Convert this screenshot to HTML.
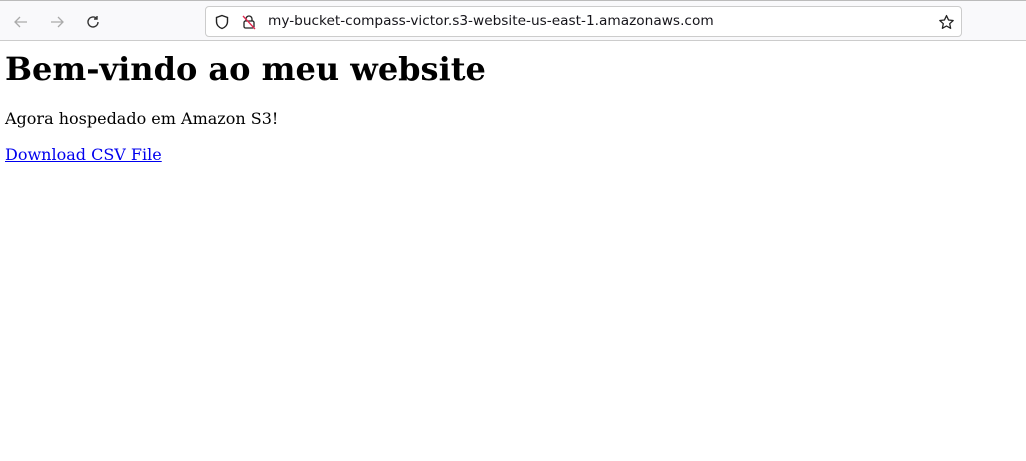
<!DOCTYPE html>
<html><head><style>
html,body{margin:0;padding:0;background:#fff;width:1026px;height:461px;overflow:hidden}
.bar{position:absolute;left:0;top:0;width:1026px;height:41px;background:#f9f9fb;border-top:1px solid #bbb;border-bottom:1px solid #ccc;box-sizing:border-box}
.url{position:absolute;left:205px;top:5px;width:757px;height:31px;background:#fff;border:1px solid #ccc;border-radius:4px;box-sizing:border-box}
.url span{position:absolute;left:62px;top:6px;font:13.7px "DejaVu Sans","Liberation Sans",sans-serif;color:#15141a}
svg{position:absolute}
.c{position:absolute;top:42px;left:0;right:0;font-family:"DejaVu Serif",serif;color:#000}
h1{font-size:32px;margin:0;position:absolute;left:5px;top:8px;white-space:nowrap}
p{margin:0;position:absolute;left:5px;font-size:16px;white-space:nowrap}
a{color:#0000ee}
</style></head><body>
<div class="bar">
<svg style="left:12px;top:12px" width="18" height="18" viewBox="0 0 18 18" fill="none" stroke="#aaa" stroke-width="1.3"><path d="M15 9H3M8 4L3 9l5 5"/></svg>
<svg style="left:48px;top:12px" width="18" height="18" viewBox="0 0 18 18" fill="none" stroke="#aaa" stroke-width="1.3"><path d="M3 9h12M10 4l5 5-5 5"/></svg>
<svg style="left:84px;top:12px" width="18" height="18" viewBox="0 0 18 18" fill="none" stroke="#333" stroke-width="1.4"><path d="M14 9a5 5 0 1 1-1.5-3.6"/><path d="M13 3v3h-3"/></svg>
<div class="url">
<svg style="left:8px;top:7px" width="16" height="16" viewBox="0 0 16 16" fill="none" stroke="#222" stroke-width="1.4"><path d="M8 1.5l5.5 2v4c0 3.5-2.5 6-5.5 7-3-1-5.5-3.5-5.5-7v-4z"/></svg>
<svg style="left:35px;top:7px" width="16" height="16" viewBox="0 0 16 16" fill="none" stroke="#222" stroke-width="1.3"><rect x="3" y="7" width="10" height="7" rx="1.5"/><path d="M5 7V5a3 3 0 0 1 6 0v2"/><path d="M2 2l12 13" stroke="#e22850"/></svg>
<span>my-bucket-compass-victor.s3-website-us-east-1.amazonaws.com</span>
<svg style="left:732px;top:7px" width="17" height="17" viewBox="0 0 16 16" fill="none" stroke="#222" stroke-width="1.2"><path d="M8 1.5l1.9 4.1 4.4.5-3.3 3 .9 4.4L8 11.3l-3.9 2.2.9-4.4-3.3-3 4.4-.5z" stroke-linejoin="round"/></svg>
</div>
</div>
<div class="c">
<h1>Bem-vindo ao meu website</h1>
<p style="top:67px">Agora hospedado em Amazon S3!</p>
<p style="top:103px"><a href="#">Download CSV File</a></p>
</div>
</body></html>
